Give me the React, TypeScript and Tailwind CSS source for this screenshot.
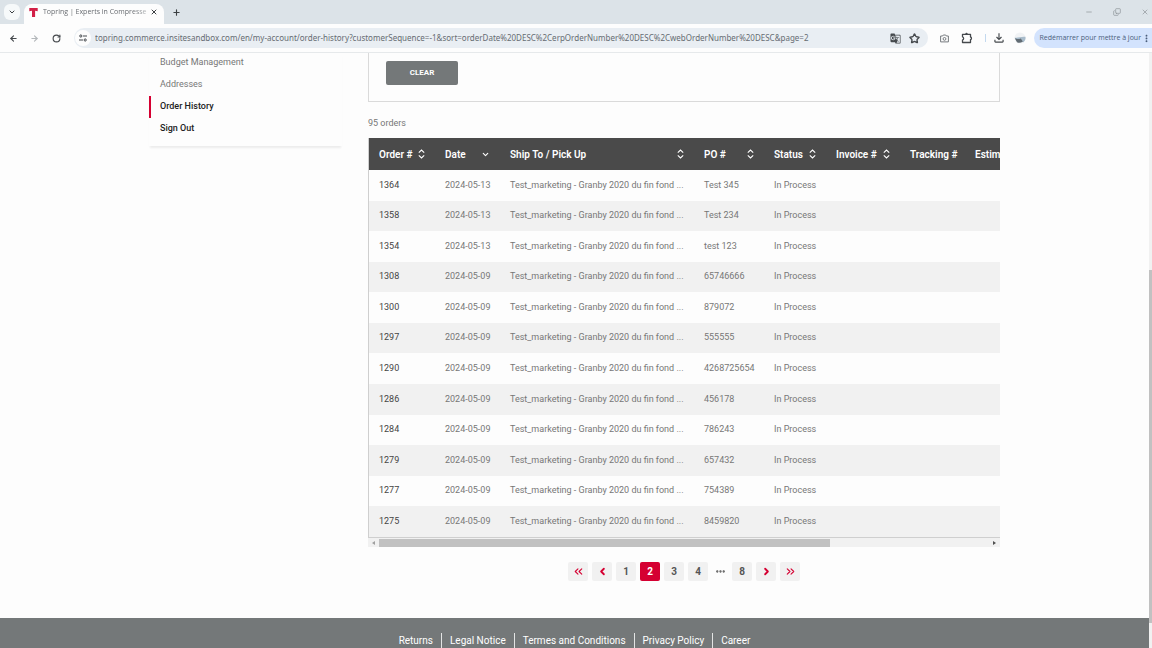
import type { ReactNode } from "react";
import { ArrowLeft, ArrowRight, ChevronDown, ChevronLeft, ChevronRight, ChevronsLeft, ChevronsRight, Copy, Ellipsis, Minus, Plus, RotateCw, Star, X } from "lucide-react";
import { MdMoreVert, MdOutlineFileDownload, MdGTranslate } from "react-icons/md";

type Order = { id: string; date: string; po: string };
type Sort = "both" | "desc" | null;

const SHIP_TO = "Test_marketing - Granby 2020 du fin fond ...";

const ORDERS: Order[] = [
  { id: "1364", date: "2024-05-13", po: "Test 345" },
  { id: "1358", date: "2024-05-13", po: "Test 234" },
  { id: "1354", date: "2024-05-13", po: "test 123" },
  { id: "1308", date: "2024-05-09", po: "65746666" },
  { id: "1300", date: "2024-05-09", po: "879072" },
  { id: "1297", date: "2024-05-09", po: "555555" },
  { id: "1290", date: "2024-05-09", po: "4268725654" },
  { id: "1286", date: "2024-05-09", po: "456178" },
  { id: "1284", date: "2024-05-09", po: "786243" },
  { id: "1279", date: "2024-05-09", po: "657432" },
  { id: "1277", date: "2024-05-09", po: "754389" },
  { id: "1275", date: "2024-05-09", po: "8459820" },
];

const COLUMNS: { label: string; width: string; sort: Sort }[] = [
  { label: "Order #", width: "w-[66px]", sort: "both" },
  { label: "Date", width: "w-[65px]", sort: "desc" },
  { label: "Ship To / Pick Up", width: "w-[194px]", sort: "both" },
  { label: "PO #", width: "w-[70px]", sort: "both" },
  { label: "Status", width: "w-[62px]", sort: "both" },
  { label: "Invoice #", width: "w-[74px]", sort: "both" },
  { label: "Tracking #", width: "w-[65px]", sort: null },
  { label: "Estimated", width: "w-[264px]", sort: null },
];

const FOOTER_LINKS = ["Returns", "Legal Notice", "Termes and Conditions", "Privacy Policy", "Career"];

const URL =
  "topring.commerce.insitesandbox.com/en/my-account/order-history?customerSequence=-1&sort=orderDate%20DESC%2CerpOrderNumber%20DESC%2CwebOrderNumber%20DESC&page=2";

function SortIcon({ sort }: { sort: Sort }) {
  if (sort === "desc") return <ChevronDown size={9} strokeWidth={3} />;
  return (
    <svg width="7" height="10" viewBox="0 0 7 10" fill="none" stroke="currentColor" strokeWidth="1.1">
      <path d="M0.8 3.7 3.5 1l2.7 2.7M0.8 6.3 3.5 9l2.7-2.7" />
    </svg>
  );
}

function TabStrip() {
  return (
    <div className="flex h-6 shrink-0 items-end bg-[#dce3e8] text-[#3c4043]">
      <button type="button" aria-label="Search tabs" className="mb-1 ml-1 flex size-4 items-center justify-center rounded-md bg-[#f6f9fa]">
        <ChevronDown size={8} strokeWidth={3} />
      </button>
      <div className="ml-1 flex h-5 w-[140px] items-center rounded-t-lg bg-[#fdfdfd] pr-1 pb-1 pl-[5px]">
        <svg width="9" height="9" viewBox="0 0 9 9" className="shrink-0" aria-hidden="true">
          <path d="M0.3 0h8.4v3.2L6.100 2.700V9H3V2.700L0.300 3.200z" fill="#d22047" />
        </svg>
        <span className="ml-[5px] flex-1 bg-linear-to-r from-[#5f6368] from-85% to-[#c5c8ca] bg-clip-text font-['Open_Sans'] text-[7px] whitespace-nowrap text-transparent">
          Topring | Experts in Compresse
        </span>
        <button type="button" aria-label="Close tab" className="ml-auto flex size-3 items-center justify-center">
          <X size={8} strokeWidth={3} />
        </button>
      </div>
      <button type="button" aria-label="New tab" className="mb-1 ml-1 flex size-4 items-center justify-center">
        <Plus size={9} strokeWidth={3} />
      </button>
      <div className="mb-1 ml-auto flex h-4 items-center gap-5 pr-[3px] text-[#8b9195]">
        <button type="button" aria-label="Minimize"><Minus size={8} /></button>
        <button type="button" aria-label="Restore"><Copy size={8} className="-scale-x-100 rotate-180" /></button>
        <button type="button" aria-label="Close window"><X size={8} /></button>
      </div>
    </div>
  );
}

function Toolbar() {
  return (
    <div className="flex h-7 shrink-0 items-center bg-[#fdfdfd] text-[#45494d]">
      <button type="button" aria-label="Back" className="ml-2 p-px"><ArrowLeft size={9} strokeWidth={3} /></button>
      <button type="button" aria-label="Forward" className="ml-[10px] p-px text-[#b4b8bb]"><ArrowRight size={9} strokeWidth={3} /></button>
      <button type="button" aria-label="Reload" className="ml-[11px] p-px"><RotateCw size={9} strokeWidth={3} /></button>

      <div className="ml-3 flex h-5 min-w-0 flex-1 items-center rounded-full bg-[#e9eef3]">
        <button type="button" aria-label="Site information" className="ml-px flex size-4 shrink-0 items-center justify-center rounded-full bg-[#fdfdfd]">
          <svg width="8" height="8" viewBox="0 0 8 8" fill="none" stroke="currentColor">
            <circle cx="1.8" cy="2" r="1.1" />
            <circle cx="6.2" cy="6" r="1.1" />
            <path d="M4 2h4M0 6h4" strokeWidth="1.2" />
          </svg>
        </button>
        <input
          aria-label="Address"
          readOnly
          value={URL}
          className="ml-1 min-w-0 flex-1 bg-transparent font-['Noto_Sans'] text-[8px] text-[#666c72] outline-none"
        />
        <button type="button" aria-label="Translate this page"><MdGTranslate size={11} /></button>
        <button type="button" aria-label="Bookmark" className="mx-2"><Star size={11} strokeWidth={3} /></button>
      </div>

      <button type="button" aria-label="Screenshot" className="ml-3 text-[#777b7f]">
        <svg width="9" height="9" viewBox="0 0 9 9" fill="none" stroke="currentColor">
          <path d="M0.600 2h2l.7-1h2.400l.7 1h2v5.900H0.600z" strokeLinejoin="round" />
          <circle cx="4.500" cy="4.900" r="1.400" />
        </svg>
      </button>
      <button type="button" aria-label="Extensions" className="ml-3">
        <svg width="12" height="12" viewBox="0 0 12 12" fill="none" stroke="currentColor" strokeWidth="1.3" strokeLinejoin="round">
          <path d="M1.500 2.300H9.500V5C10.800 5 10.800 7.600 9.500 7.600V10.500H1.500V8C3 7.800 3 5 1.500 4.800z" />
          <path d="M4.300 1.900a1.200 1.200 0 0 1 2.400 0z" fill="currentColor" stroke="none" />
        </svg>
      </button>
      <span className="ml-3 h-2 w-px bg-[#c3d9ef]" />
      <button type="button" aria-label="Downloads" className="ml-[6px]"><MdOutlineFileDownload size={14} /></button>
      <button type="button" aria-label="Profile" className="ml-2">
        <svg width="12" height="12" viewBox="0 0 12 12">
          <circle cx="6" cy="6" r="5.5" fill="#f1f3f5" />
          <path d="M0.600 5.800C3 6 8 4.200 11.400 4.800A5.500 5.500 0 0 1 9.500 10.300L3 9z" fill="#a9bccb" />
          <path d="M0.800 6.300c2 .8 4 1 6 .2l2 3A5.500 5.500 0 0 1 3 10.300z" fill="#626c74" />
        </svg>
      </button>
      <button type="button" className="ml-2 flex h-5 shrink-0 items-center rounded-l-full bg-[#d3e3fd] pl-[6px] font-['Open_Sans'] text-[7px] whitespace-nowrap text-[#4b5e7c]">
        Redémarrer pour mettre à jour
        <MdMoreVert size={11} />
      </button>
    </div>
  );
}

function Sidebar() {
  return (
    <nav aria-label="My account" className="-mt-px w-[193px] shrink-0 self-start pb-[6px] text-[9px] shadow-[0_3px_2px_-1px_rgba(0,0,0,0.07)]">
      <a href="#budget" className="flex h-[22px] items-center pl-[11px]">Budget Management</a>
      <a href="#addresses" className="flex h-[22px] items-center pl-[11px]">Addresses</a>
      <a href="#orders" aria-current="page" className="flex h-[22px] items-center border-l-2 border-[#d50032] pl-[9px] font-medium text-[#222]">
        Order History
      </a>
      <a href="#signout" className="flex h-[22px] items-center pl-[11px] font-medium text-[#222]">Sign Out</a>
    </nav>
  );
}

function OrdersTable() {
  return (
    <div className="mt-2">
      <div className="overflow-hidden border-b border-l border-[#cfcfcf]">
        <table className="h-[399px] w-[860px] table-fixed border-collapse text-left">
          <thead>
            <tr className="h-8 bg-[#4a4a4a] text-[10px] text-white">
              {COLUMNS.map((c) => (
                <th key={c.label} className={`${c.width} px-[10px] py-0 font-semibold whitespace-nowrap`}>
                  {c.sort ? (
                    <button type="button" className="flex w-full items-center justify-between">
                      {c.label} <SortIcon sort={c.sort} />
                    </button>
                  ) : (
                    c.label
                  )}
                </th>
              ))}
            </tr>
          </thead>
          <tbody>
            {ORDERS.map((o) => (
              <tr key={o.id} className="whitespace-nowrap even:bg-[#f1f1f1]">
                <td className="px-[10px] py-0"><a href={`#order-${o.id}`} className="text-[#444]">{o.id}</a></td>
                <td className="px-[10px] py-0">{o.date}</td>
                <td className="px-[10px] py-0">{SHIP_TO}</td>
                <td className="px-[10px] py-0">{o.po}</td>
                <td className="px-[10px] py-0">In Process</td>
                <td />
                <td />
                <td />
              </tr>
            ))}
          </tbody>
        </table>
      </div>
      {/* Horizontal scrollbar */}
      <div className="flex h-[9px] items-center bg-[#f1f1f1] px-1" aria-hidden="true">
        <span className="border-y-2 border-r-3 border-y-transparent border-r-[#a0a0a0]" />
        <span className="mx-1 h-2 flex-1">
          <span className="block h-full w-[74%] bg-[#c1c1c1]" />
        </span>
        <span className="border-y-2 border-l-3 border-y-transparent border-l-[#505050]" />
      </div>
    </div>
  );
}

function PageButton({ label, active, children }: { label: string; active?: boolean; children: ReactNode }) {
  return (
    <button
      type="button"
      aria-label={label}
      aria-current={active ? "page" : undefined}
      className={`flex h-[19px] w-5 items-center justify-center rounded-xs ${active ? "bg-[#d50032] text-white" : "bg-[#f1f1f1]"}`}
    >
      {children}
    </button>
  );
}

function Pagination() {
  return (
    <nav aria-label="Pagination" className="mt-[15px] flex items-center justify-center gap-1 text-[10px] font-bold text-[#555]">
      <PageButton label="First page"><ChevronsLeft size={13} className="text-[#d50032]" /></PageButton>
      <PageButton label="Previous page"><ChevronLeft size={11} strokeWidth={4} className="text-[#d50032]" /></PageButton>
      <PageButton label="Page 1">1</PageButton>
      <PageButton label="Page 2" active>2</PageButton>
      <PageButton label="Page 3">3</PageButton>
      <PageButton label="Page 4">4</PageButton>
      <span className="flex w-4 justify-center"><Ellipsis size={11} strokeWidth={3} /></span>
      <PageButton label="Page 8">8</PageButton>
      <PageButton label="Next page"><ChevronRight size={11} strokeWidth={4} className="text-[#d50032]" /></PageButton>
      <PageButton label="Last page"><ChevronsRight size={13} className="text-[#d50032]" /></PageButton>
    </nav>
  );
}

export default function App() {
  return (
    <div className="flex h-screen flex-col overflow-hidden bg-[#fdfdfd] font-[Roboto,sans-serif] text-[9px] text-[#777]">
      <TabStrip />
      <Toolbar />

      <div className="flex min-h-0 flex-1 border-t border-[#e6e9eb]">
        <div className="flex min-w-0 flex-1 flex-col overflow-hidden">
          <main className="mx-auto flex w-full max-w-[851px] gap-[26px]">
            <Sidebar />
            <section className="min-w-0 flex-1">
              <div className="border-x border-b border-[#dadada] px-[17px] pt-2 pb-4">
                <button type="button" className="flex h-6 w-[72px] items-center justify-center rounded-xs bg-[#747879] text-[8px] font-bold text-white">
                  CLEAR
                </button>
              </div>
              <p className="mt-[14px] leading-[14px]">95 orders</p>
              <OrdersTable />
              <Pagination />
            </section>
          </main>

          <footer className="mt-[37px] flex min-h-[30px] flex-1 justify-center bg-[#747879] pt-[15px] text-[10px] text-white">
            {FOOTER_LINKS.map((link) => (
              <a key={link} href="#footer" className="border-l border-white/80 px-2 leading-[15px] first:border-l-0">
                {link}
              </a>
            ))}
          </footer>
        </div>

        {/* Vertical scrollbar */}
        <div className="flex w-[3px] shrink-0 flex-col bg-[#f1f1f1] pb-[25px]" aria-hidden="true">
          <span className="mt-auto h-[62%] w-full bg-[#c1c1c1]" />
        </div>
      </div>
    </div>
  );
}
